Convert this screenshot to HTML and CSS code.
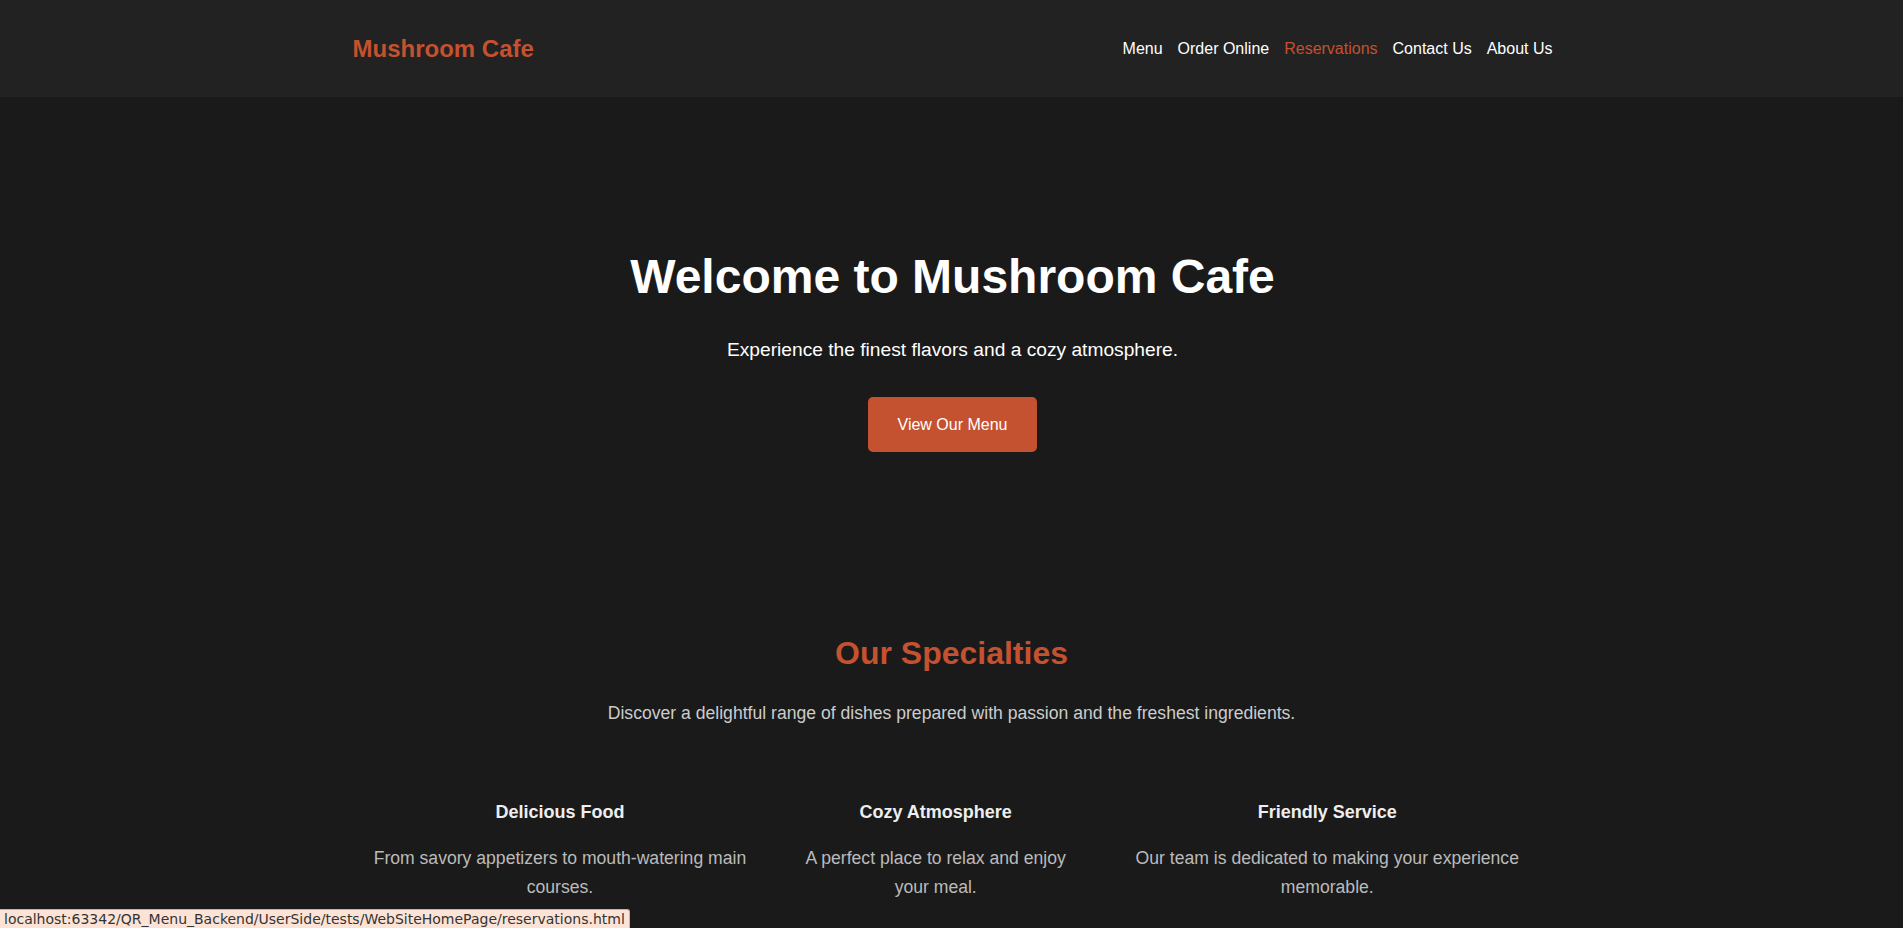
FILE: index.html
```html
<!DOCTYPE html>
<html lang="en">
<head>
<meta charset="utf-8">
<title>Mushroom Cafe</title>
<link rel="stylesheet" href="styles.css">
</head>
<body>
<header class="site-header">
  <div class="container header-inner">
    <a class="logo" href="#">Mushroom Cafe</a>
    <nav class="nav">
      <a href="#">Menu</a>
      <a href="#">Order Online</a>
      <a href="#" class="active">Reservations</a>
      <a href="#">Contact Us</a>
      <a href="#">About Us</a>
    </nav>
  </div>
</header>

<section class="hero">
  <h1>Welcome to Mushroom Cafe</h1>
  <p class="hero-sub">Experience the finest flavors and a cozy atmosphere.</p>
  <a class="btn" href="#">View Our Menu</a>
</section>

<section class="specialties">
  <div class="container">
    <h2>Our Specialties</h2>
    <p class="intro">Discover a delightful range of dishes prepared with passion and the freshest ingredients.</p>
    <div class="features">
      <div class="feature">
        <h3>Delicious Food</h3>
        <p>From savory appetizers to mouth-watering main courses.</p>
      </div>
      <div class="feature">
        <h3>Cozy Atmosphere</h3>
        <p>A perfect place to relax and enjoy your meal.</p>
      </div>
      <div class="feature">
        <h3>Friendly Service</h3>
        <p>Our team is dedicated to making your experience memorable.</p>
      </div>
    </div>
  </div>
</section>

<div class="status-bar">localhost:63342/QR_Menu_Backend/UserSide/tests/WebSiteHomePage/reservations.html</div>
</body>
</html>
```

FILE: styles.css
```css
* {
  box-sizing: border-box;
}

html, body {
  margin: 0;
  padding: 0;
}

body {
  background: #1a1a1a;
  color: #ffffff;
  font-family: "Liberation Sans", Arial, sans-serif;
  font-size: 16px;
}

.container {
  max-width: 1200px;
  margin: 0 auto;
}

.site-header {
  background: #222222;
  height: 97px;
}

.header-inner {
  height: 100%;
  display: flex;
  align-items: center;
  justify-content: space-between;
  padding-left: 1px;
}

.logo {
  color: #c4512f;
  font-size: 24px;
  font-weight: bold;
  text-decoration: none;
}

.nav {
  display: flex;
  gap: 15px;
  margin-right: -1px;
}

.nav a {
  color: #ffffff;
  text-decoration: none;
  font-size: 16px;
}

.nav a.active {
  color: #c4512f;
}

.hero {
  text-align: center;
  padding: 152px 19px 0 21px;
  height: 538px;
}

.hero h1 {
  margin: 0;
  font-size: 48px;
  font-weight: bold;
  color: #ffffff;
}

.hero-sub {
  margin: 35px 0 0;
  font-size: 19.2px;
  color: #ffffff;
}

.btn {
  display: inline-block;
  margin-top: 36px;
  background: #c4512f;
  color: #ffffff;
  text-decoration: none;
  font-size: 16px;
  padding: 18.5px 29.5px;
  border-radius: 5px;
}

.specialties {
  text-align: center;
}

.specialties h2 {
  margin: 0;
  font-size: 32px;
  font-weight: bold;
  color: #c4512f;
}

.intro {
  margin: 31px 0 0;
  font-size: 17.6px;
  color: #cccccc;
}

.features {
  display: flex;
  margin-top: 58px;
}

.feature {
  padding: 20px;
}

.feature h3 {
  margin: 0;
  font-size: 18px;
  font-weight: bold;
  color: #eeeeee;
}

.feature p {
  margin: 21px 0 0;
  font-size: 17.6px;
  line-height: 29px;
  color: #bbbbbb;
}

.status-bar {
  position: fixed;
  left: 0;
  bottom: 0;
  height: 19px;
  padding: 0 4px;
  background: #fde3d6;
  color: #333333;
  border: 1px solid #c9b3a8;
  border-left: none;
  border-bottom: none;
  border-top-right-radius: 3px;
  font-family: "DejaVu Sans", sans-serif;
  font-size: 14px;
  line-height: 18px;
  white-space: nowrap;
}
```
